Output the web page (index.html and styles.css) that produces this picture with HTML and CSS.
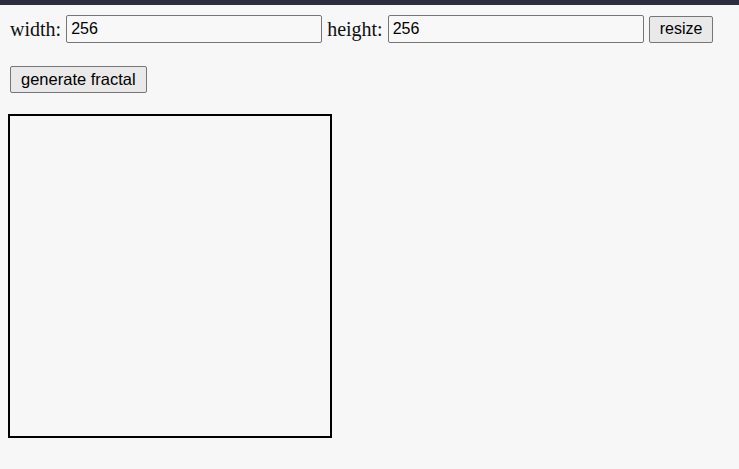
FILE: index.html
```html
<!DOCTYPE html>
<html>
<head>
<meta charset="utf-8">
<link rel="stylesheet" href="styles.css">
</head>
<body>
<div class="topbar"></div>
<div class="page">
  <div class="row">
    <label class="lbl">width:</label>
    <input class="field" type="text" value="256">
    <label class="lbl">height:</label>
    <input class="field" type="text" value="256">
    <button class="btn">resize</button>
  </div>
  <div class="row2">
    <button class="btn btn-wide">generate fractal</button>
  </div>
  <div class="canvas"></div>
</div>
</body>
</html>
```
FILE: styles.css
```css
html, body {
  margin: 0;
  padding: 0;
  background: #f7f7f7;
}
.topbar {
  height: 5px;
  background: #2c2e3e;
}
.page {
  padding: 10px 8px 0 8px;
}
.row {
  display: flex;
  align-items: center;
  gap: 5px;
  padding-left: 2px;
  height: 28px;
}
.lbl {
  font-family: "Liberation Serif", serif;
  font-size: 20px;
  line-height: 26px;
  color: #111;
}
.field {
  box-sizing: border-box;
  width: 256px;
  height: 28px;
  margin: 0;
  padding: 0 4px 1px 4px;
  border: 1px solid #767676;
  border-radius: 2px;
  background: #f8f8f8;
  font-family: "Liberation Sans", Arial, sans-serif;
  font-size: 16px;
  color: #000;
}
.btn {
  box-sizing: border-box;
  height: 27px;
  margin: 0;
  padding: 0 10px 1px 10px;
  border: 1px solid #767676;
  border-radius: 2px;
  background: #e9e9e9;
  font-family: "Liberation Sans", Arial, sans-serif;
  font-size: 16px;
  color: #000;
}
.btn-wide {
  font-size: 16.5px;
  padding: 0 10px 1px 10px;
}
.row2 {
  display: flex;
  padding: 23px 0 0 2px;
}
.canvas {
  box-sizing: border-box;
  margin-top: 21px;
  width: 324px;
  height: 324px;
  border: 2px solid #000;
}
```
